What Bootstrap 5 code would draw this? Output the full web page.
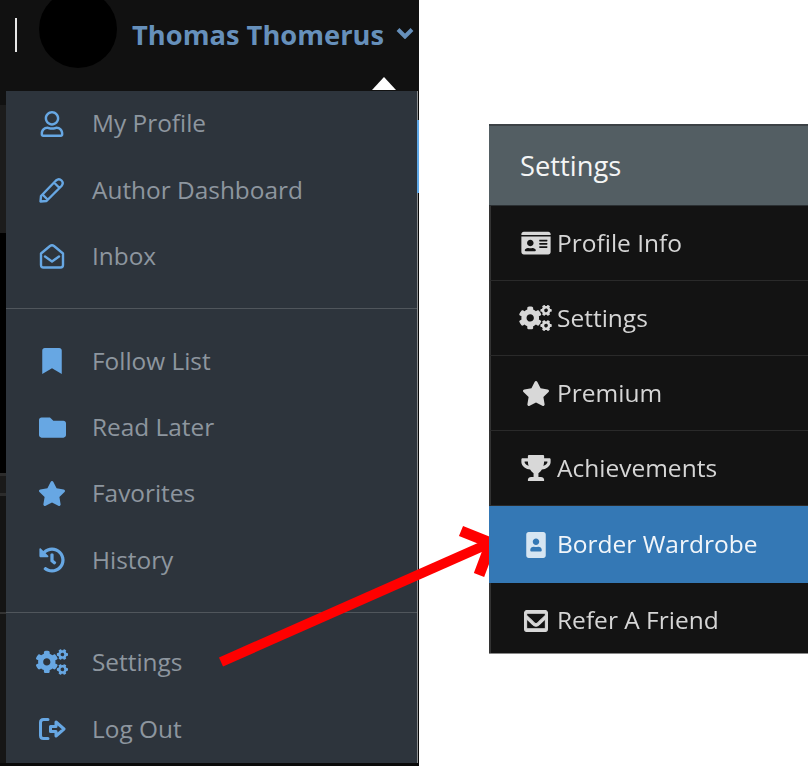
<!DOCTYPE html>
<html lang="en">
<head>
<meta charset="utf-8">
<title>Settings</title>
<link href="https://cdn.jsdelivr.net/npm/bootstrap@5.3.0/dist/css/bootstrap.min.css" rel="stylesheet">
<style>
html,body{margin:0;width:808px;height:766px;overflow:hidden;background:#fff;font-family:"Open Sans","Liberation Sans",sans-serif}
.stage{position:relative;width:808px;height:766px;filter:blur(.5px)}
.lpanel{width:419px;height:766px;background:#0a0a0a;flex:none}
.topbar{position:relative;height:91px;padding:0 0 21px 15px;background:#111;flex:none}
.vbar{width:2px;height:34px;background:#e8e8e8;flex:none}
.avatar{width:78px;height:78px;border-radius:50%;background:#000;margin:0 15px 12px 22px;flex:none}
.uname{font-size:27.3px;font-weight:700;color:#6690bb;white-space:nowrap;line-height:1;padding-bottom:1px}
.chev{width:18px;height:12px;margin:0 0 5px 12px;flex:none}
.tip{position:absolute;left:372px;bottom:1px;width:0;height:0;border-left:12.5px solid transparent;border-right:12.5px solid transparent;border-bottom:13px solid #fff}
.strip{width:6px;flex:none}
.strip div{flex:none}
.s1{height:14px;background:#111}.s2{height:128px;background:#1c1c1c}.s3{height:240px;background:#000}
.s4{height:3px;background:#2c2c2c}.s5{height:17px;background:#1a1a1a}.s6{height:116px;background:#141414}
.s7{height:2px;background:#333}.s8{height:149px;background:#161616}
.menuwrap{position:relative;width:412px;height:672px;background:#2d343c;border-right:1px solid #8d8f91;flex:none}
.menuwrap .dropdown-menu{background:transparent;border:0;border-radius:0;padding:0;margin:0;width:411px;min-width:0}
.menuwrap .dropdown-item{display:flex;align-items:center;height:66.4px;padding:0 0 1px 26px;color:#8d969f;font-size:24.4px;line-height:1}
.menuwrap .dropdown-divider{margin:18px 0 19px;border-top:1px solid #50565c;opacity:1}
.menuwrap .dropdown-divider.snug{margin-bottom:17px}
.micon{width:40px;margin-right:20px;flex:none;display:flex;justify-content:center;align-items:center;color:#67a7e3}
.micon svg{display:block;fill:currentColor}
.micon svg.ln{fill:none;stroke:currentColor;stroke-width:2.4;stroke-linejoin:round;stroke-linecap:round}
.scrollmark{position:absolute;right:-2px;top:29px;width:2px;height:73px;background:#5fa8e8}
.rpanel{padding:124px 0 0 70px;flex:1 1 auto;min-width:0}
.setcard{width:340px;height:530px;overflow:hidden;background:#131313;border:0;border-bottom:1px solid #888;border-radius:0}
.sethead{flex:none;height:82px;background:#535e63;border-top:2px solid #3c4246;border-bottom:1px solid #2b3033;padding:0 0 0 31px;color:#f4f5f5;font-size:27.3px;line-height:1}
.setcard .list-group{border-radius:0;flex:none}
.setcard .list-group-item{display:flex;align-items:center;flex:none;height:75px;padding:0 0 0 28px;background:#131313;color:#d6d6d6;font-size:24.5px;line-height:1;border:0;border-left:2px solid #333;border-bottom:1px solid #2a2a2a}
.setcard .list-group-item.active{height:77px;padding-left:30px;background:#3478b5;color:#f2f6fa;border:0;margin-top:0}
.ricon{width:33px;margin-right:5px;flex:none;display:flex;justify-content:center;align-items:center}
.ricon svg{display:block;fill:#d8d8d8}
.ricon svg.heavy{stroke:#d8d8d8;stroke-width:22}
.active .ricon svg{fill:#d6e5f2}
.arrowlay{position:absolute;left:0;top:0;pointer-events:none}
</style>
</head>
<body>
<div class="stage d-flex">
  <div class="lpanel d-flex flex-column">
    <div class="topbar d-flex align-items-center">
      <div class="vbar"></div>
      <div class="avatar"></div>
      <span class="uname">Thomas Thomerus</span>
      <svg class="chev" viewBox="0 0 18 12"><path d="M2 2.500 L9 9.500 L16 2.500" fill="none" stroke="#6690bb" stroke-width="4"/></svg>
      <div class="tip"></div>
    </div>
    <div class="d-flex">
      <div class="strip d-flex flex-column">
        <div class="s1"></div><div class="s2"></div><div class="s3"></div><div class="s4"></div><div class="s5"></div><div class="s4"></div><div class="s6"></div><div class="s7"></div><div class="s8"></div>
      </div>
      <div class="menuwrap">
        <div class="dropdown-menu show position-static">
          <a class="dropdown-item" href="#"><span class="micon"><svg width="24" height="26" viewBox="0 0 448 512"><path d="M313.6 304c-28.7 0-42.5 16-89.6 16-47.1 0-60.8-16-89.6-16C60.2 304 0 364.2 0 438.4V464c0 26.5 21.5 48 48 48h352c26.500 0 48-21.500 48-48v-25.600c0-74.200-60.200-134.400-134.400-134.400zM400 464H48v-25.600c0-47.600 38.800-86.400 86.400-86.400 14.600 0 38.300 16 89.600 16 51.700 0 74.900-16 89.600-16 47.600 0 86.400 38.800 86.400 86.400V464zM224 288c79.500 0 144-64.500 144-144S303.500 0 224 0 80 64.500 80 144s64.500 144 144 144zm0-240c52.900 0 96 43.100 96 96s-43.100 96-96 96-96-43.100-96-96 43.100-96 96-96z"/></svg></span>My Profile</a>
          <a class="dropdown-item" href="#"><span class="micon"><svg class="ln" width="26" height="26" viewBox="0 0 26 26"><path d="M2 19 L17 3.500 Q20 1 22.500 3.500 Q25 6 22.500 9 L7.500 24 L1.500 24.500 Z M15 5.500 L20.500 11 M3.500 17.500 L8.500 22.500"/></svg></span>Author Dashboard</a>
          <a class="dropdown-item" href="#"><span class="micon"><svg class="ln" width="26" height="26" viewBox="0 0 26 26"><path d="M2 10.500 L11 3 Q13 1.500 15 3 L24 10.500 V22 Q24 24.500 21.500 24.500 H4.500 Q2 24.500 2 22 Z M6 13.500 L13 18.500 L20 13.500"/></svg></span>Inbox</a>
          <div class="dropdown-divider"></div>
          <a class="dropdown-item" href="#"><span class="micon"><svg width="20" height="26" viewBox="0 0 384 512"><path d="M0 512V48C0 21.490 21.490 0 48 0h288c26.510 0 48 21.490 48 48v464L192 400 0 512z"/></svg></span>Follow List</a>
          <a class="dropdown-item" href="#"><span class="micon"><svg width="27" height="27" viewBox="0 0 512 512"><path d="M464 128H272l-64-64H48C21.490 64 0 85.490 0 112v288c0 26.510 21.490 48 48 48h416c26.510 0 48-21.490 48-48V176c0-26.510-21.490-48-48-48z"/></svg></span>Read Later</a>
          <a class="dropdown-item" href="#"><span class="micon"><svg width="28" height="25" viewBox="0 0 576 512"><path d="M259.300 17.800L194 150.200 47.900 171.500c-26.200 3.800-36.700 36.100-17.700 54.600l105.700 103-25 145.500c-4.500 26.300 23.200 46 46.400 33.700L288 439.600l130.700 68.700c23.200 12.200 50.900-7.400 46.400-33.700l-25-145.500 105.700-103c19-18.500 8.500-50.800-17.700-54.600L382 150.200 316.700 17.800c-11.700-23.600-45.600-23.900-57.400 0z"/></svg></span>Favorites</a>
          <a class="dropdown-item" href="#"><span class="micon"><svg width="26" height="26" viewBox="0 0 512 512"><path d="M504 255.531c.253 136.640-111.180 248.372-247.820 248.468-59.015.042-113.223-20.530-155.822-54.911-11.077-8.940-11.905-25.541-1.839-35.607l11.267-11.267c8.609-8.609 22.353-9.551 31.891-1.984C173.062 425.135 212.781 440 256 440c101.705 0 184-82.311 184-184 0-101.705-82.311-184-184-184-48.814 0-93.149 18.969-126.068 49.932l50.754 50.754c10.080 10.080 2.941 27.314-11.313 27.314H24c-8.837 0-16-7.163-16-16V38.627c0-14.254 17.234-21.393 27.314-11.314l49.372 49.372C129.209 34.136 189.552 8 256 8c136.810 0 247.747 110.780 248 247.531zm-180.912 78.784l9.823-12.630c8.138-10.463 6.253-25.542-4.210-33.679L288 256.349V152c0-13.255-10.745-24-24-24h-16c-13.255 0-24 10.745-24 24v135.651l65.409 50.874c10.463 8.137 25.541 6.253 33.679-4.210z"/></svg></span>History</a>
          <div class="dropdown-divider snug"></div>
          <a class="dropdown-item" href="#"><span class="micon"><svg width="32" height="26" viewBox="0 0 640 512"><use href="#cogs"/></svg></span>Settings</a>
          <a class="dropdown-item" href="#"><span class="micon"><svg class="ln" width="28" height="24" viewBox="0 0 28 24"><path stroke-width="3" d="M10 2.500 H5.500 Q2.500 2.500 2.500 5.500 V18.500 Q2.500 21.500 5.500 21.500 H10 M12.500 9.500 H18 V5 L26 12 L18 19 V14.500 H12.500 Z"/></svg></span>Log Out</a>
        </div>
        <div class="scrollmark"></div>
      </div>
    </div>
  </div>
  <div class="rpanel">
    <div class="card setcard">
      <div class="card-header sethead d-flex align-items-center rounded-0">Settings</div>
      <div class="list-group list-group-flush">
        <a class="list-group-item" href="#"><span class="ricon"><svg width="30" height="26" viewBox="0 0 576 512"><path d="M528 32H48C21.500 32 0 53.500 0 80v16h576V80c0-26.500-21.500-48-48-48zM0 432c0 26.500 21.500 48 48 48h480c26.500 0 48-21.500 48-48V128H0v304zm352-232c0-4.400 3.600-8 8-8h144c4.400 0 8 3.600 8 8v16c0 4.400-3.600 8-8 8H360c-4.400 0-8-3.600-8-8v-16zm0 64c0-4.400 3.600-8 8-8h144c4.400 0 8 3.600 8 8v16c0 4.400-3.600 8-8 8H360c-4.400 0-8-3.600-8-8v-16zm0 64c0-4.400 3.600-8 8-8h144c4.400 0 8 3.600 8 8v16c0 4.400-3.600 8-8 8H360c-4.400 0-8-3.600-8-8v-16zM176 192c35.300 0 64 28.700 64 64s-28.700 64-64 64-64-28.700-64-64 28.700-64 64-64zM67.100 396.200C75.500 370.500 99.600 352 128 352h8.200c12.300 5.100 25.700 8 39.800 8s27.600-2.900 39.800-8h8.200c28.400 0 52.500 18.500 60.900 44.200 3.200 9.900-5.200 19.800-15.600 19.800H82.700c-10.400 0-18.800-10-15.600-19.800z"/></svg></span>Profile Info</a>
        <a class="list-group-item" href="#"><span class="ricon"><svg width="33" height="26" viewBox="0 0 640 512"><use href="#cogs"/></svg></span>Settings</a>
        <a class="list-group-item" href="#"><span class="ricon"><svg width="28" height="25" viewBox="0 0 576 512"><path d="M259.300 17.800L194 150.200 47.900 171.500c-26.200 3.800-36.700 36.100-17.700 54.600l105.700 103-25 145.500c-4.500 26.300 23.200 46 46.400 33.700L288 439.600l130.700 68.700c23.200 12.200 50.900-7.400 46.400-33.700l-25-145.500 105.700-103c19-18.500 8.500-50.800-17.700-54.600L382 150.200 316.700 17.800c-11.700-23.600-45.600-23.900-57.400 0z"/></svg></span>Premium</a>
        <a class="list-group-item" href="#"><span class="ricon"><svg width="30" height="26" viewBox="0 0 576 512"><path d="M552 64H448V24c0-13.300-10.700-24-24-24H152c-13.300 0-24 10.700-24 24v40H24C10.700 64 0 74.700 0 88v56c0 35.700 22.500 72.400 61.900 100.700 31.500 22.700 69.800 37.100 110 41.700C203.300 338.500 240 360 240 360v72h-48c-35.300 0-64 20.700-64 56v12c0 6.600 5.400 12 12 12h296c6.600 0 12-5.400 12-12v-12c0-35.300-28.700-56-64-56h-48v-72s36.700-21.500 68.100-73.600c40.300-4.600 78.600-19 110-41.700 39.300-28.300 61.900-65 61.900-100.700V88c0-13.300-10.700-24-24-24zM99.300 192.800C74.900 175.200 64 155.600 64 144v-16h64.200c1 32.600 5.800 61.200 12.800 86.200-15.100-5.200-29.200-12.400-41.700-21.400zM512 144c0 16.100-17.700 36.100-35.300 48.800-12.500 9-26.700 16.200-41.800 21.400 7-25 11.800-53.600 12.800-86.200H512v16z"/></svg></span>Achievements</a>
        <a class="list-group-item active" href="#"><span class="ricon"><svg width="20" height="26" viewBox="0 0 384 512"><path d="M336 0H48C21.500 0 0 21.500 0 48v416c0 26.500 21.500 48 48 48h288c26.500 0 48-21.500 48-48V48c0-26.500-21.500-48-48-48zM192 128c35.300 0 64 28.700 64 64s-28.700 64-64 64-64-28.700-64-64 28.700-64 64-64zm112 236.800c0 10.600-10 19.200-22.400 19.200H102.400C90 384 80 375.400 80 364.800v-19.200c0-31.800 30.100-57.600 67.200-57.600h5c12.300 5.100 25.700 8 39.800 8s27.600-2.900 39.800-8h5c37.100 0 67.200 25.800 67.200 57.600v19.200z"/></svg></span>Border Wardrobe</a>
        <a class="list-group-item border-bottom-0" href="#"><span class="ricon"><svg class="heavy" width="24" height="22" viewBox="-11 53 534 406" preserveAspectRatio="none"><path d="M464 64H48C21.490 64 0 85.490 0 112v288c0 26.510 21.490 48 48 48h416c26.510 0 48-21.490 48-48V112c0-26.510-21.490-48-48-48zm0 48v40.805c-22.422 18.259-58.168 46.651-134.587 106.490-16.841 13.247-50.201 45.072-73.413 44.701-23.208.375-56.579-31.459-73.413-44.701C106.180 199.465 70.425 171.067 48 152.805V112h416zM48 400V214.398c22.914 18.251 55.409 43.862 104.938 82.646 21.857 17.205 60.134 55.186 103.062 54.955 42.717.231 80.509-37.199 103.053-54.947 49.528-38.783 82.032-64.401 104.947-82.653V400H48z"/></svg></span>Refer A Friend</a>
      </div>
    </div>
  </div>
  <svg class="arrowlay" width="808" height="766" viewBox="0 0 808 766">
    <path d="M221 662 L490 543" fill="none" stroke="#ff0000" stroke-width="10"/>
    <path d="M461 531 L491 543 L479 575" fill="none" stroke="#ff0000" stroke-width="11"/>
  </svg>
</div>
<svg width="0" height="0" class="d-none"><defs>
<path id="cogs" d="M512.100 191l-8.200 14.300c-3 5.300-9.400 7.500-15.100 5.400-11.800-4.400-22.600-10.700-32.100-18.600-4.600-3.800-5.800-10.500-2.800-15.700l8.200-14.300c-6.900-8-12.300-17.300-15.900-27.400h-16.500c-6 0-11.200-4.300-12.200-10.300-2-12-2.100-24.600 0-37.100 1-6 6.200-10.400 12.200-10.400h16.500c3.600-10.100 9-19.400 15.900-27.400l-8.200-14.300c-3-5.200-1.900-11.900 2.800-15.700 9.500-7.900 20.400-14.200 32.100-18.600 5.700-2.100 12.100.1 15.100 5.400l8.200 14.300c10.500-1.900 21.200-1.900 31.700 0L552 6.300c3-5.300 9.400-7.500 15.100-5.400 11.800 4.400 22.600 10.700 32.100 18.600 4.600 3.800 5.800 10.500 2.800 15.700l-8.200 14.300c6.900 8 12.300 17.300 15.900 27.400h16.500c6 0 11.200 4.300 12.200 10.300 2 12 2.100 24.600 0 37.100-1 6-6.200 10.400-12.200 10.400h-16.500c-3.600 10.100-9 19.400-15.900 27.400l8.200 14.300c3 5.200 1.900 11.900-2.800 15.700-9.500 7.900-20.400 14.200-32.100 18.600-5.700 2.100-12.100-.1-15.100-5.400l-8.200-14.300c-10.400 1.900-21.200 1.900-31.700 0zm-10.500-58.800c38.500 29.600 82.400-14.300 52.800-52.800-38.500-29.700-82.400 14.300-52.800 52.800zM386.300 286.100l33.700 16.800c10.100 5.800 14.500 18.100 10.500 29.100-8.900 24.200-26.400 46.400-42.600 65.800-7.400 8.900-20.200 11.100-30.300 5.300l-29.100-16.800c-16 13.700-34.600 24.600-54.900 31.700v33.600c0 11.600-8.300 21.600-19.700 23.600-24.600 4.200-50.400 4.400-75.900 0-11.500-2-20-11.900-20-23.600V418c-20.300-7.200-38.900-18-54.900-31.700L74 403c-10 5.800-22.900 3.600-30.300-5.300-16.200-19.400-33.300-41.600-42.200-65.700-4-10.900.4-23.200 10.500-29.100l33.300-16.800c-3.900-20.900-3.900-42.400 0-63.400L12 205.800c-10.100-5.800-14.600-18.100-10.500-29 8.900-24.200 26-46.400 42.200-65.800 7.400-8.900 20.200-11.100 30.300-5.300l29.100 16.800c16-13.700 34.600-24.600 54.900-31.700V57.100c0-11.500 8.200-21.500 19.600-23.500 24.600-4.200 50.500-4.400 76-.1 11.500 2 20 11.900 20 23.600v33.600c20.300 7.200 38.900 18 54.900 31.700l29.100-16.800c10-5.800 22.900-3.600 30.300 5.300 16.200 19.400 33.200 41.600 42.100 65.800 4 10.900.1 23.200-10 29.100l-33.700 16.800c3.900 21 3.900 42.500 0 63.500zm-117.600 21.100c59.200-77-28.700-164.900-105.700-105.700-59.200 77 28.700 164.900 105.700 105.700zm243.400 182.700l-8.200 14.300c-3 5.300-9.400 7.500-15.100 5.400-11.800-4.400-22.600-10.700-32.100-18.600-4.600-3.800-5.800-10.500-2.800-15.700l8.200-14.300c-6.900-8-12.300-17.300-15.900-27.400h-16.500c-6 0-11.200-4.300-12.200-10.300-2-12-2.100-24.600 0-37.100 1-6 6.200-10.400 12.200-10.400h16.500c3.600-10.100 9-19.400 15.900-27.400l-8.200-14.300c-3-5.200-1.900-11.900 2.800-15.700 9.500-7.900 20.400-14.200 32.100-18.600 5.700-2.100 12.100.1 15.100 5.400l8.200 14.300c10.500-1.900 21.200-1.900 31.700 0l8.200-14.300c3-5.300 9.400-7.500 15.100-5.400 11.800 4.400 22.600 10.700 32.100 18.600 4.600 3.800 5.800 10.500 2.800 15.700l-8.200 14.300c6.900 8 12.300 17.300 15.900 27.400h16.500c6 0 11.200 4.300 12.200 10.300 2 12 2.100 24.600 0 37.100-1 6-6.200 10.400-12.200 10.400h-16.500c-3.600 10.100-9 19.400-15.900 27.400l8.200 14.300c3 5.200 1.900 11.900-2.800 15.700-9.500 7.900-20.400 14.200-32.100 18.600-5.700 2.100-12.100-.1-15.100-5.400l-8.200-14.300c-10.400 1.900-21.200 1.900-31.700 0zM501.600 431c38.500 29.600 82.400-14.300 52.800-52.800-38.500-29.600-82.400 14.300-52.800 52.800z"/>
</defs></svg>
<script src="https://cdn.jsdelivr.net/npm/bootstrap@5.3.0/dist/js/bootstrap.bundle.min.js"></script>
</body>
</html>
